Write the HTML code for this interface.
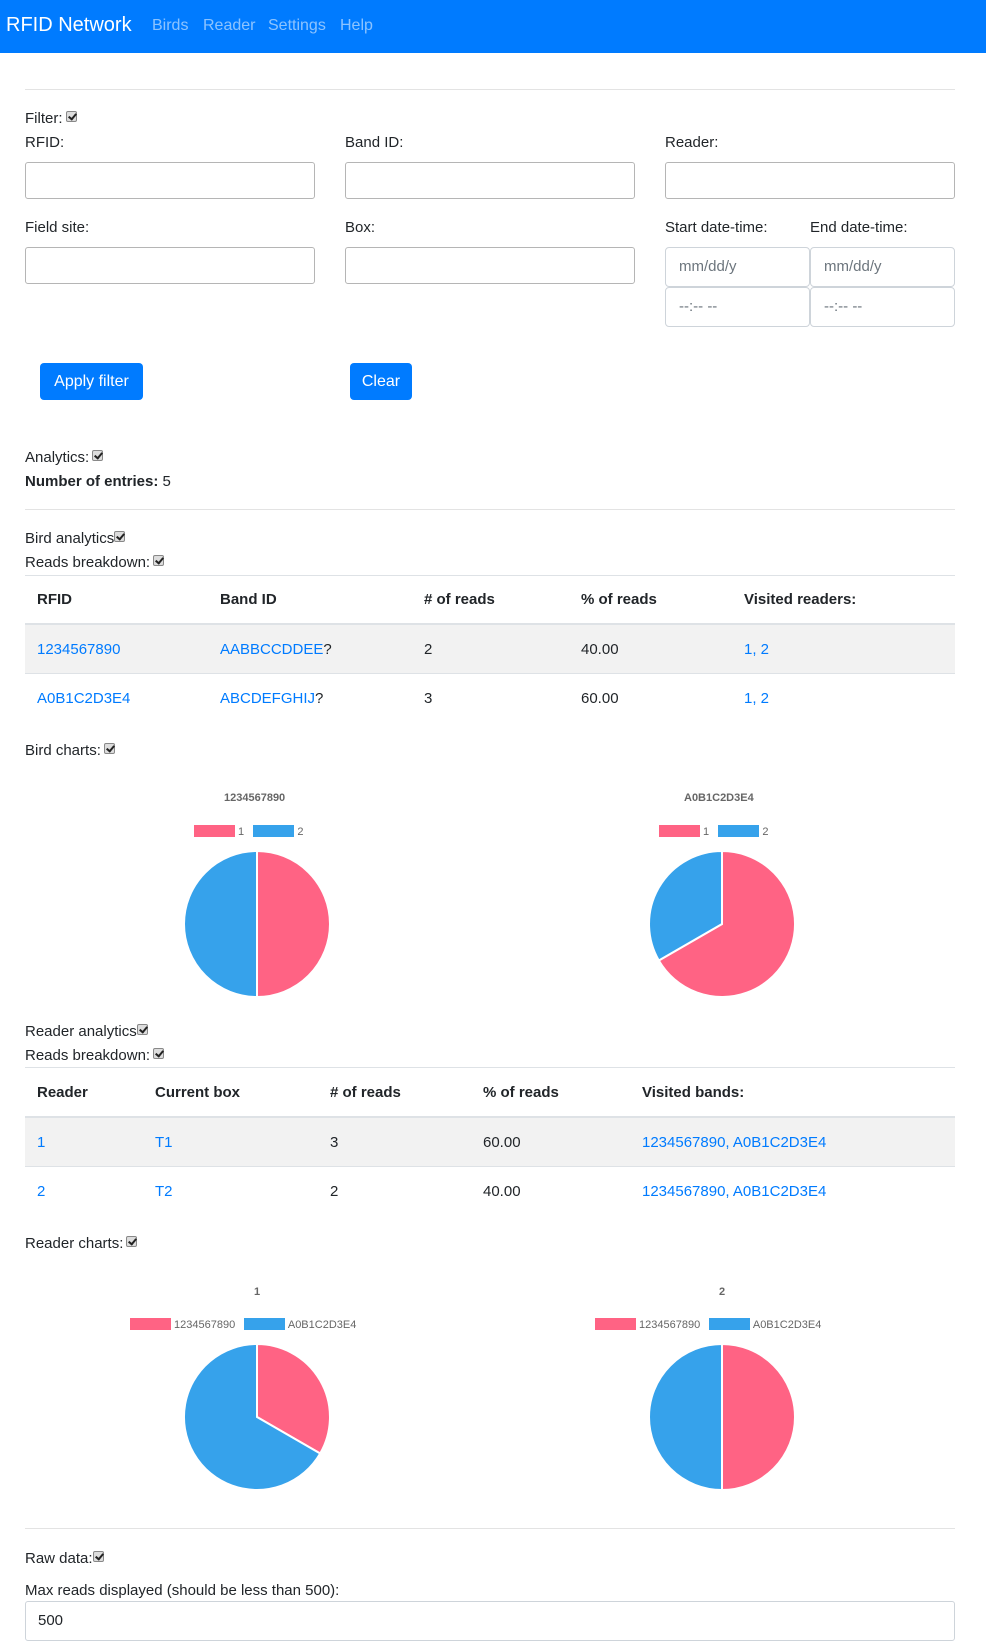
<!DOCTYPE html>
<html><head><meta charset="utf-8"><style>
*{box-sizing:border-box}
body{margin:0;width:986px;height:1632px;overflow:hidden;font-family:"Liberation Sans",Arial,sans-serif;font-size:15px;color:#212529;background:#fff;position:relative}
.a{position:absolute;white-space:nowrap}
.nav{position:absolute;left:0;top:0;width:986px;height:53px;background:#007bff}
.hr{position:absolute;left:25px;width:930px;height:1px;background:#e3e3e3}
.inp{position:absolute;border:1px solid #b5b5b5;border-radius:3px;background:#fff}
.dt{position:absolute;border:1px solid #ced4da;border-radius:4px;color:#6c757d;padding:10px 0 0 13px;font-size:15px}
.btn{position:absolute;background:#007bff;color:#fff;border-radius:4px;font-size:16px;text-align:center;line-height:37px}
.cb{display:inline-block;width:11px;height:11px;border:1px solid #888;border-radius:2px;background:#ddd;vertical-align:1px;margin-left:3px;position:relative}
.cb:after{content:"";position:absolute;left:3px;top:0px;width:3px;height:6px;border:solid #222;border-width:0 2px 2px 0;transform:rotate(40deg)}
.lk{color:#007bff}
.th{font-weight:bold}
.row{position:absolute;left:25px;width:930px}
.sm{font-size:11px;color:#666}
</style></head><body>
<div class="nav"></div>
<div class="a" style="left:6px;top:14px;color:#fff;font-size:20px">RFID Network</div>
<div class="a" style="left:152px;top:17px;color:rgba(255,255,255,.55);font-size:16px">Birds</div>
<div class="a" style="left:203px;top:17px;color:rgba(255,255,255,.55);font-size:16px">Reader</div>
<div class="a" style="left:268px;top:17px;color:rgba(255,255,255,.55);font-size:16px">Settings</div>
<div class="a" style="left:340px;top:17px;color:rgba(255,255,255,.55);font-size:16px">Help</div>

<div class="hr" style="top:89px"></div>
<div class="a" style="left:25px;top:110px">Filter:<span class="cb"></span></div>
<div class="a" style="left:25px;top:134px">RFID:</div>
<div class="a" style="left:345px;top:134px">Band ID:</div>
<div class="a" style="left:665px;top:134px">Reader:</div>
<div class="inp" style="left:25px;top:162px;width:290px;height:37px"></div>
<div class="inp" style="left:345px;top:162px;width:290px;height:37px"></div>
<div class="inp" style="left:665px;top:162px;width:290px;height:37px"></div>
<div class="a" style="left:25px;top:219px">Field site:</div>
<div class="a" style="left:345px;top:219px">Box:</div>
<div class="a" style="left:665px;top:219px">Start date-time:</div>
<div class="a" style="left:810px;top:219px">End date-time:</div>
<div class="inp" style="left:25px;top:247px;width:290px;height:37px"></div>
<div class="inp" style="left:345px;top:247px;width:290px;height:37px"></div>
<div class="dt" style="left:665px;top:247px;width:145px;height:40px">mm/dd/y</div>
<div class="dt" style="left:810px;top:247px;width:145px;height:40px">mm/dd/y</div>
<div class="dt" style="left:665px;top:287px;width:145px;height:40px">--:-- --</div>
<div class="dt" style="left:810px;top:287px;width:145px;height:40px">--:-- --</div>
<div class="btn" style="left:40px;top:363px;width:103px;height:37px">Apply filter</div>
<div class="btn" style="left:350px;top:363px;width:62px;height:37px">Clear</div>

<div class="a" style="left:25px;top:449px">Analytics:<span class="cb"></span></div>
<div class="a" style="left:25px;top:473px"><b>Number of entries:</b> 5</div>
<div class="hr" style="top:509px"></div>
<div class="a" style="left:25px;top:530px">Bird analytics<span class="cb" style="margin-left:0"></span></div>
<div class="a" style="left:25px;top:554px">Reads breakdown:<span class="cb"></span></div>
<div class="hr" style="top:575px;background:#dee2e6"></div>
<div class="hr" style="top:623px;height:2px;background:#dee2e6"></div>
<div class="row" style="top:625px;height:49px;background:#f2f2f2;border-bottom:1px solid #dee2e6"></div>
<div class="a th" style="left:37px;top:591px">RFID</div>
<div class="a th" style="left:220px;top:591px">Band ID</div>
<div class="a th" style="left:424px;top:591px"># of reads</div>
<div class="a th" style="left:581px;top:591px">% of reads</div>
<div class="a th" style="left:744px;top:591px">Visited readers:</div>
<div class="a lk" style="left:37px;top:641px">1234567890</div>
<div class="a" style="left:220px;top:641px"><span class="lk">AABBCCDDEE</span>?</div>
<div class="a" style="left:424px;top:641px">2</div>
<div class="a" style="left:581px;top:641px">40.00</div>
<div class="a lk" style="left:744px;top:641px">1, 2</div>
<div class="a lk" style="left:37px;top:690px">A0B1C2D3E4</div>
<div class="a" style="left:220px;top:690px"><span class="lk">ABCDEFGHIJ</span>?</div>
<div class="a" style="left:424px;top:690px">3</div>
<div class="a" style="left:581px;top:690px">60.00</div>
<div class="a lk" style="left:744px;top:690px">1, 2</div>

<div class="a" style="left:25px;top:742px">Bird charts:<span class="cb"></span></div>
<div class="a sm" style="left:224px;top:792px;font-weight:bold">1234567890</div>
<div class="a sm" style="left:684px;top:792px;font-weight:bold">A0B1C2D3E4</div>
<div class="a sm" style="left:194px;top:825px"><span style="display:inline-block;width:41px;height:12px;background:#ff6384;vertical-align:-2px"></span> 1 &nbsp; <span style="display:inline-block;width:41px;height:12px;background:#36a2eb;vertical-align:-2px"></span> 2</div>
<div class="a sm" style="left:659px;top:825px"><span style="display:inline-block;width:41px;height:12px;background:#ff6384;vertical-align:-2px"></span> 1 &nbsp; <span style="display:inline-block;width:41px;height:12px;background:#36a2eb;vertical-align:-2px"></span> 2</div>
<svg class="a" style="left:0;top:0" width="986" height="1632">
<g stroke="#fff" stroke-width="2">
<path d="M257,924 L257,851 A73,73 0 0 1 257,997 Z" fill="#ff6384"/>
<path d="M257,924 L257,997 A73,73 0 0 1 257,851 Z" fill="#36a2eb"/>
<path d="M722,924 L722,851 A73,73 0 1 1 658.8,960.5 Z" fill="#ff6384"/>
<path d="M722,924 L658.8,960.5 A73,73 0 0 1 722,851 Z" fill="#36a2eb"/>
<path d="M257,1417 L257,1344 A73,73 0 0 1 320.2,1453.5 Z" fill="#ff6384"/>
<path d="M257,1417 L320.2,1453.5 A73,73 0 1 1 257,1344 Z" fill="#36a2eb"/>
<path d="M722,1417 L722,1344 A73,73 0 0 1 722,1490 Z" fill="#ff6384"/>
<path d="M722,1417 L722,1490 A73,73 0 0 1 722,1344 Z" fill="#36a2eb"/>
</g></svg>

<div class="a" style="left:25px;top:1023px">Reader analytics<span class="cb" style="margin-left:0"></span></div>
<div class="a" style="left:25px;top:1047px">Reads breakdown:<span class="cb"></span></div>
<div class="hr" style="top:1067px;background:#dee2e6"></div>
<div class="hr" style="top:1116px;height:2px;background:#dee2e6"></div>
<div class="row" style="top:1118px;height:49px;background:#f2f2f2;border-bottom:1px solid #dee2e6"></div>
<div class="a th" style="left:37px;top:1084px">Reader</div>
<div class="a th" style="left:155px;top:1084px">Current box</div>
<div class="a th" style="left:330px;top:1084px"># of reads</div>
<div class="a th" style="left:483px;top:1084px">% of reads</div>
<div class="a th" style="left:642px;top:1084px">Visited bands:</div>
<div class="a lk" style="left:37px;top:1134px">1</div>
<div class="a lk" style="left:155px;top:1134px">T1</div>
<div class="a" style="left:330px;top:1134px">3</div>
<div class="a" style="left:483px;top:1134px">60.00</div>
<div class="a lk" style="left:642px;top:1134px">1234567890, A0B1C2D3E4</div>
<div class="a lk" style="left:37px;top:1183px">2</div>
<div class="a lk" style="left:155px;top:1183px">T2</div>
<div class="a" style="left:330px;top:1183px">2</div>
<div class="a" style="left:483px;top:1183px">40.00</div>
<div class="a lk" style="left:642px;top:1183px">1234567890, A0B1C2D3E4</div>

<div class="a" style="left:25px;top:1235px">Reader charts:<span class="cb"></span></div>
<div class="a sm" style="left:254px;top:1286px;font-weight:bold">1</div>
<div class="a sm" style="left:719px;top:1286px;font-weight:bold">2</div>
<div class="a sm" style="left:130px;top:1318px"><span style="display:inline-block;width:41px;height:12px;background:#ff6384;vertical-align:-2px"></span> 1234567890 &nbsp; <span style="display:inline-block;width:41px;height:12px;background:#36a2eb;vertical-align:-2px"></span> A0B1C2D3E4</div>
<div class="a sm" style="left:595px;top:1318px"><span style="display:inline-block;width:41px;height:12px;background:#ff6384;vertical-align:-2px"></span> 1234567890 &nbsp; <span style="display:inline-block;width:41px;height:12px;background:#36a2eb;vertical-align:-2px"></span> A0B1C2D3E4</div>

<div class="hr" style="top:1528px"></div>
<div class="a" style="left:25px;top:1550px">Raw data:<span class="cb" style="margin-left:0"></span></div>
<div class="a" style="left:25px;top:1582px">Max reads displayed (should be less than 500):</div>
<div class="inp" style="left:25px;top:1601px;width:930px;height:40px;border-color:#ced4da;padding:10px 0 0 12px">500</div>
</body></html>
